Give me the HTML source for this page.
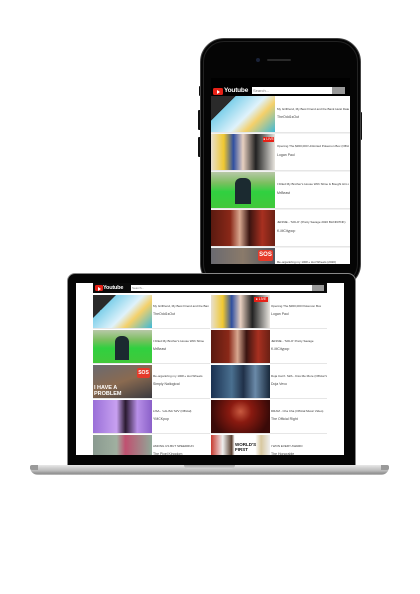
<!DOCTYPE html>
<html><head><meta charset="utf-8"><style>
*{margin:0;padding:0;box-sizing:border-box}
body{width:420px;height:594px;background:#fff;position:relative;overflow:hidden;font-family:"Liberation Sans","Noto Sans CJK KR",sans-serif}
.abs{position:absolute}
.row{position:absolute;background:#fff;border-bottom:1px solid #e6e6e6}
.th{position:absolute;left:0;top:0;bottom:0}
.tx{position:absolute;font-size:3px;line-height:4px;color:#333;white-space:nowrap;overflow:hidden}
.ch{position:absolute;font-size:3.5px;color:#444;white-space:nowrap}
.yt{position:absolute;background:#e62117;border-radius:1.5px}
.yt:after{content:"";position:absolute;left:38%;top:25%;border-left:3px solid #fff;border-top:2px solid transparent;border-bottom:2px solid transparent}
</style></head><body>

<!-- PHONE -->
<div class="abs" style="left:199px;top:86px;width:3px;height:10px;background:#111;border-radius:1px"></div>
<div class="abs" style="left:198px;top:110px;width:3px;height:20px;background:#111;border-radius:1px"></div>
<div class="abs" style="left:198px;top:137px;width:3px;height:20px;background:#111;border-radius:1px"></div>
<div class="abs" style="left:359px;top:112px;width:3px;height:28px;background:#111;border-radius:1px"></div>
<div class="abs" style="left:200px;top:38px;width:161px;height:250px;background:#050505;border-radius:24px;border:1px solid #444"></div>
<div class="abs" style="left:203px;top:41px;width:155px;height:244px;border-radius:21px;border:1px solid #222"></div>
<div class="abs" style="left:256px;top:58px;width:4px;height:4px;border-radius:50%;background:#1a2238"></div>
<div class="abs" style="left:267px;top:59px;width:24px;height:2px;border-radius:1px;background:#2a2a2a"></div>
<div class="abs" style="left:211px;top:78px;width:139px;height:186px;background:#000;overflow:hidden">
  <div class="abs" style="left:0;top:18px;width:139px;height:170px;background:#f2f2f2"></div>
  <div class="yt" style="left:2px;top:10px;width:10px;height:7px"></div>
  <div class="abs" style="left:13px;top:8.5px;font-size:6.5px;font-weight:bold;color:#fff;letter-spacing:-0.2px">Youtube</div>
  <div class="abs" style="left:41px;top:9px;width:80px;height:7px;background:#fff;font-size:4px;line-height:7px;color:#777;padding-left:1px">Search...</div>
  <div class="abs" style="left:121px;top:9px;width:13px;height:7px;background:#999"></div>

  <div class="row" style="left:0;top:18px;width:139px;height:37px">
    <div class="th" style="width:64px;background:linear-gradient(135deg,#2a2a2a 0 25%,#7fd0ea 25%,#dff2fb 55%,#f4d06a 70%,#3fb9d7 100%)"></div>
    <div class="tx" style="left:66px;top:11px;width:72px">My Girlfriend, My Best Friend and the Bank Heist Date</div>
    <div class="ch" style="left:66px;top:19px">TheOdd1sOut</div></div>
  <div class="row" style="left:0;top:56px;width:139px;height:37px">
    <div class="th" style="width:64px;background:linear-gradient(90deg,#e8e0d0 0,#f0c830 20%,#2f4fa0 35%,#e8d0c0 50%,#222 70%,#e9e6e0 100%)"></div>
    <div class="abs" style="left:52px;top:3px;width:11px;height:5px;background:#e62117;color:#fff;font-size:3.5px;line-height:5px;text-align:center">● LIVE</div>
    <div class="tx" style="left:66px;top:10px;width:72px">Opening The $300,000 Unlimited Pokemon Box (Official Live Stream)</div>
    <div class="ch" style="left:66px;top:19px">Logan Paul</div></div>
  <div class="row" style="left:0;top:94px;width:139px;height:37px">
    <div class="th" style="width:64px;background:linear-gradient(180deg,#b8c8a8 0,#7cbf60 30%,#30d040 55%,#42c83a 100%)"></div>
    <div class="abs" style="left:24px;top:6px;width:16px;height:26px;background:#1b2a30;border-radius:6px 6px 0 0"></div>
    <div class="tx" style="left:66px;top:10px;width:72px">I Filled My Brother's House With Slime & Bought Him A New Car</div>
    <div class="ch" style="left:66px;top:19px">MrBeast</div></div>
  <div class="row" style="left:0;top:132px;width:139px;height:37px">
    <div class="th" style="width:64px;background:linear-gradient(90deg,#5a1a10 0,#8a2818 30%,#d8a890 45%,#3a1410 60%,#a83020 80%,#6a2014 100%)"></div>
    <div class="tx" style="left:66px;top:10px;width:72px">JENNIE - 'SOLO' (Pretty Savage 2020 BLINKPINK) </div>
    <div class="ch" style="left:66px;top:19px">K-MCitypop</div></div>
  <div class="row" style="left:0;top:170px;width:139px;height:37px">
    <div class="th" style="width:64px;background:linear-gradient(90deg,#6a6a70,#8a7a6a 50%,#505560)"></div>
    <div class="abs" style="left:47px;top:2px;width:15px;height:11px;background:#e53a2a;border-radius:2px;color:#fff;font-size:6px;line-height:11px;text-align:center;font-weight:bold">SOS</div>
    <div class="tx" style="left:66px;top:12px;width:72px">Re-organizing my 100K+ Hot Wheels (2020)</div></div>
</div>

<!-- LAPTOP -->
<div class="abs" style="left:67px;top:273px;width:289px;height:193px;background:#050505;border-radius:8px 8px 0 0;border:1px solid #888"></div>
<div class="abs" style="left:76px;top:283px;width:268px;height:172px;background:#fff;overflow:hidden">
  <div class="abs" style="left:17px;top:0;width:234px;height:10px;background:#0a0a0a"></div>
  <div class="yt" style="left:19px;top:2px;width:8px;height:6px"></div>
  <div class="abs" style="left:27px;top:1.5px;font-size:5.5px;font-weight:bold;color:#fff;letter-spacing:-0.2px">Youtube</div>
  <div class="abs" style="left:55px;top:2px;width:181px;height:6px;background:#fff;font-size:3px;line-height:6px;color:#777;padding-left:1px">Search...</div>
  <div class="abs" style="left:236px;top:2px;width:12px;height:6px;background:#999"></div>

  <!-- col1 -->
  <div class="row" style="left:17px;top:12px;width:117px;height:34px"><div class="th" style="width:59px;background:linear-gradient(135deg,#2a2a2a 0 25%,#7fd0ea 25%,#dff2fb 55%,#f4d06a 70%,#3fb9d7 100%)"></div>
    <div class="tx" style="left:60px;top:9px;width:56px">My Girlfriend, My Best Friend and the Bank Heist</div><div class="ch" style="left:60px;top:17px">TheOdd1sOut</div></div>
  <div class="row" style="left:17px;top:47px;width:117px;height:34px"><div class="th" style="width:59px;background:linear-gradient(180deg,#b8c8a8 0,#7cbf60 30%,#30d040 55%,#42c83a 100%)"></div>
    <div class="abs" style="left:22px;top:6px;width:14px;height:24px;background:#1b2a30;border-radius:6px 6px 0 0"></div>
    <div class="tx" style="left:60px;top:9px;width:56px">I Filled My Brother's House With Slime</div><div class="ch" style="left:60px;top:17px">MrBeast</div></div>
  <div class="row" style="left:17px;top:82px;width:117px;height:34px"><div class="th" style="width:59px;background:linear-gradient(160deg,#6a6a70,#8a6a50 50%,#3a3a40)"></div>
    <div class="abs" style="left:44px;top:3px;width:13px;height:10px;background:#e53a2a;border-radius:2px;color:#fff;font-size:5px;line-height:10px;text-align:center;font-weight:bold">SOS</div>
    <div class="abs" style="left:1px;top:20px;font-size:5.5px;line-height:6px;color:#fff;font-weight:bold">I HAVE A<br>PROBLEM</div>
    <div class="tx" style="left:60px;top:9px;width:56px">Re-organizing my 100K+ Hot Wheels</div><div class="ch" style="left:60px;top:17px">Simply Nailogical</div></div>
  <div class="row" style="left:17px;top:117px;width:117px;height:34px"><div class="th" style="width:59px;background:linear-gradient(90deg,#9a70d8,#c8a0f0 40%,#2a1a30 55%,#b890e8 75%,#8a60c8)"></div>
    <div class="tx" style="left:60px;top:9px;width:56px">LISA - 'LALISA' M/V (Official)</div><div class="ch" style="left:60px;top:17px">YMCKpop</div></div>
  <div class="row" style="left:17px;top:152px;width:117px;height:34px"><div class="th" style="width:59px;background:linear-gradient(90deg,#8a9a90,#a0b0a0 40%,#c05070 55%,#90a898)"></div>
    <div class="tx" style="left:60px;top:9px;width:56px">AMONG US BUT SPEEDRUN</div><div class="ch" style="left:60px;top:17px">The Pixel Kingdom</div></div>
  <!-- col2 -->
  <div class="row" style="left:135px;top:12px;width:116px;height:34px"><div class="th" style="width:59px;background:linear-gradient(90deg,#e8e0d0 0,#f0c830 20%,#2f4fa0 35%,#e8d0c0 50%,#222 70%,#e9e6e0 100%)"></div>
    <div class="abs" style="left:43px;top:2px;width:14px;height:5px;background:#e62117;color:#fff;font-size:3.5px;line-height:5px;text-align:center">● LIVE</div>
    <div class="tx" style="left:60px;top:9px;width:56px">Opening The $300,000 Pokemon Box</div><div class="ch" style="left:60px;top:17px">Logan Paul</div></div>
  <div class="row" style="left:135px;top:47px;width:116px;height:34px"><div class="th" style="width:59px;background:linear-gradient(90deg,#5a1a10 0,#8a2818 30%,#d8a890 45%,#3a1410 60%,#a83020 80%,#6a2014 100%)"></div>
    <div class="tx" style="left:60px;top:9px;width:56px">JENNIE - 'SOLO' Pretty Savage</div><div class="ch" style="left:60px;top:17px">K-MCitypop</div></div>
  <div class="row" style="left:135px;top:82px;width:116px;height:34px"><div class="th" style="width:59px;background:linear-gradient(90deg,#1a3050,#4a7090 35%,#203048 55%,#6a8aa8 75%,#18283a)"></div>
    <div class="tx" style="left:60px;top:9px;width:56px">Doja Cat ft. SZA - Kiss Me More (Official Video)</div><div class="ch" style="left:60px;top:17px">Doja Vevo</div></div>
  <div class="row" style="left:135px;top:117px;width:116px;height:34px"><div class="th" style="width:59px;background:radial-gradient(circle at 50% 35%,#c85a40 0,#8a1a10 30%,#3a0a08 80%)"></div>
    <div class="tx" style="left:60px;top:9px;width:56px">DRAM - Cha Cha (Official Music Video)</div><div class="ch" style="left:60px;top:17px">The Official Right</div></div>
  <div class="row" style="left:135px;top:152px;width:116px;height:34px"><div class="th" style="width:59px;background:linear-gradient(90deg,#c83a30 0,#eee 20%,#5a4030 35%,#fff 40%,#fff 75%,#d8c8a0 85%,#eee)"></div>
    <div class="abs" style="left:24px;top:7px;font-size:4.5px;font-weight:bold;color:#111;line-height:5px">WORLD'S<br>FIRST</div>
    <div class="tx" style="left:60px;top:9px;width:56px">I WON EVERY AWARD</div><div class="ch" style="left:60px;top:17px">The Honorable</div></div>
</div>
<!-- base -->
<div class="abs" style="left:30px;top:465px;width:359px;height:10px;border-radius:2px 2px 8px 8px;background:linear-gradient(180deg,#e8e8e8 0,#cfcfcf 30%,#b8b8b8 60%,#8e8e8e 85%,#c8c8c8 100%)"></div>
<div class="abs" style="left:30px;top:465px;width:8px;height:5px;background:#9a9a9a;border-radius:2px 0 0 2px"></div>
<div class="abs" style="left:381px;top:465px;width:8px;height:5px;background:#9a9a9a;border-radius:0 2px 2px 0"></div>
<div class="abs" style="left:184px;top:465px;width:51px;height:4px;background:linear-gradient(180deg,#a8a8a8,#d6d6d6);border-radius:0 0 5px 5px"></div>
</body></html>
